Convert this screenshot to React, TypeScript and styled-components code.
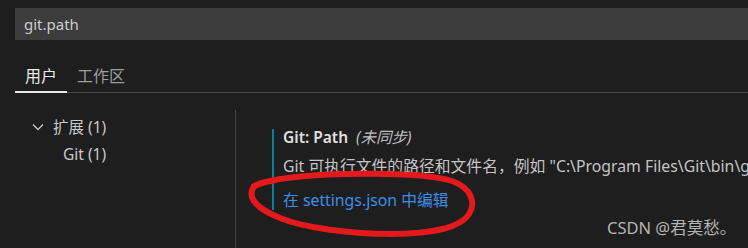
import React from "react";
import styled, { createGlobalStyle } from "styled-components";

const Global = createGlobalStyle`
  html, body { margin: 0; padding: 0; background: #1e1e1e; }
  body { font-family: "Noto Sans", "Noto Sans CJK SC", sans-serif; }
`;

const Page = styled.div`
  position: relative;
  width: 748px;
  height: 248px;
  overflow: hidden;
  background: #1e1e1e;
  display: flex;
  flex-direction: column;
`;

const SearchBox = styled.div`
  margin: 8px 0 0 15px;
  height: 32px;
  background: #3c3c3c;
  display: flex;
  align-items: center;
  padding-left: 9px;
  font-size: 15px;
  color: #cccccc;
`;

const TabBar = styled.div`
  margin: 18px 0 0 15px;
  display: flex;
  border-bottom: 1px solid #454545;
`;

const Tab = styled.div<{ $active?: boolean }>`
  padding: 0 10px;
  height: 35px;
  box-sizing: border-box;
  display: flex;
  align-items: center;
  font-size: 16px;
  color: ${(p) => (p.$active ? "#e7e7e7" : "#9d9d9d")};
  border-bottom: 2px solid ${(p) => (p.$active ? "#e7e7e7" : "transparent")};
  margin-bottom: -1px;
`;

const Body = styled.div`
  display: flex;
  flex: 1;
  margin-top: 17px;
`;

const Sidebar = styled.div`
  width: 235px;
  border-right: 1px solid #454545;
  padding-top: 3px;
  display: flex;
  flex-direction: column;
`;

const TreeRow = styled.div<{ $indent: number }>`
  height: 27px;
  display: flex;
  align-items: center;
  padding-left: ${(p) => p.$indent}px;
  font-size: 15.5px;
  color: #c8c8c8;
  gap: 9px;
`;

const Chevron = styled.svg`
  width: 12px;
  height: 8px;
  flex: none;
`;

const Content = styled.div`
  flex: 1;
  padding: 19px 0 0 36px;
  min-width: 0;
`;

const SettingItem = styled.div`
  border-left: 2px solid #0c7d9d;
  padding-left: 9px;
  display: flex;
  flex-direction: column;
  white-space: nowrap;
`;

const Title = styled.div`
  line-height: 16px;
  font-size: 15.5px;
  color: #e0e0e0;
  font-weight: 600;
`;

const Sync = styled.span`
  font-weight: 400;
  font-style: italic;
  color: #bdbdbd;
  margin-left: 8px;
`;

const Description = styled.div`
  margin-top: 11px;
  line-height: 20px;
  font-size: 15.8px;
  color: #c4c4c4;
  overflow: hidden;
`;

const EditLink = styled.div`
  margin-top: 14px;
  line-height: 20px;
  font-size: 15.8px;
  color: #3b8eea;
`;

const Scribble = styled.svg`
  position: absolute;
  left: 0;
  top: 0;
  width: 748px;
  height: 248px;
  pointer-events: none;
`;

const Watermark = styled.div`
  position: absolute;
  left: 607px;
  top: 217px;
  font-size: 16.5px;
  line-height: 22px;
  color: #b3b3b3;
  white-space: nowrap;
`;

export default function App() {
  return (
    <>
      <Global />
      <Page>
        <SearchBox>git.path</SearchBox>
        <TabBar>
          <Tab $active>用户</Tab>
          <Tab>工作区</Tab>
        </TabBar>
        <Body>
          <Sidebar>
            <TreeRow $indent={32}>
              <Chevron viewBox="0 0 12 8">
                <polyline points="1,1.5 6,6.5 11,1.5" fill="none" stroke="#c5c5c5" strokeWidth="1.3" />
              </Chevron>
              扩展 (1)
            </TreeRow>
            <TreeRow $indent={63}>Git (1)</TreeRow>
          </Sidebar>
          <Content>
            <SettingItem>
              <Title>
                Git: Path<Sync>(未同步)</Sync>
              </Title>
              <Description>
                Git 可执行文件的路径和文件名，例如 "C:\Program Files\Git\bin\git.exe" (Windows)。
              </Description>
              <EditLink>在 settings.json 中编辑</EditLink>
            </SettingItem>
          </Content>
        </Body>
        <Scribble viewBox="0 0 748 248">
          <path
            d="M 254 186 C 270 179, 305 175, 345 174 C 390 173, 430 174, 452 181 C 472 188, 476 203, 469 214 C 460 228, 430 234, 392 234 C 350 234, 305 228, 280 218 C 258 209, 249 200, 252 190 C 254 184, 262 182, 272 181"
            fill="none"
            stroke="#e3191b"
            strokeWidth="6"
            strokeLinecap="round"
          />
        </Scribble>
        <Watermark>CSDN @君莫愁。</Watermark>
      </Page>
    </>
  );
}
